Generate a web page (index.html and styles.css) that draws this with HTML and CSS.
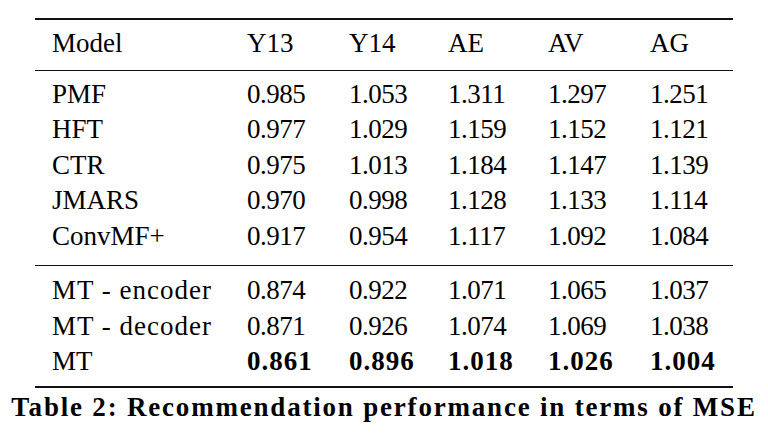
FILE: index.html
```html
<!DOCTYPE html>
<html>
<head>
<meta charset="utf-8">
<link rel="stylesheet" href="styles.css">
</head>
<body>
<figure class="figure">
  <table class="results">
    <colgroup>
      <col class="c-model"><col class="c-y13"><col class="c-y14"><col class="c-ae"><col class="c-av"><col class="c-ag">
    </colgroup>
    <thead>
      <tr><th>Model</th><th>Y13</th><th>Y14</th><th>AE</th><th>AV</th><th>AG</th></tr>
    </thead>
    <tbody class="baselines">
      <tr class="first"><td>PMF</td><td>0.985</td><td>1.053</td><td>1.311</td><td>1.297</td><td>1.251</td></tr>
      <tr><td>HFT</td><td>0.977</td><td>1.029</td><td>1.159</td><td>1.152</td><td>1.121</td></tr>
      <tr><td>CTR</td><td>0.975</td><td>1.013</td><td>1.184</td><td>1.147</td><td>1.139</td></tr>
      <tr><td>JMARS</td><td>0.970</td><td>0.998</td><td>1.128</td><td>1.133</td><td>1.114</td></tr>
      <tr class="last"><td>ConvMF+</td><td>0.917</td><td>0.954</td><td>1.117</td><td>1.092</td><td>1.084</td></tr>
    </tbody>
    <tbody class="ours">
      <tr class="first"><td class="lower">MT - encoder</td><td>0.874</td><td>0.922</td><td>1.071</td><td>1.065</td><td>1.037</td></tr>
      <tr><td class="lower">MT - decoder</td><td>0.871</td><td>0.926</td><td>1.074</td><td>1.069</td><td>1.038</td></tr>
      <tr class="last"><td>MT</td><td class="best">0.861</td><td class="best">0.896</td><td class="best">1.018</td><td class="best">1.026</td><td class="best">1.004</td></tr>
    </tbody>
  </table>
  <figcaption class="caption">Table 2: Recommendation performance in terms of MSE</figcaption>
</figure>
</body>
</html>
```
FILE: styles.css
```css
body {
  margin: 0;
  background: #fff;
  color: #000;
  font-family: "Liberation Serif", serif;
}

.figure {
  margin: 0;
  padding-top: 18px;
  display: flex;
  flex-direction: column;
  align-items: center;
}

.results {
  width: 698px;
  border-collapse: collapse;
  table-layout: fixed;
  font-family: "Liberation Serif", serif;
  font-size: 27px;
  line-height: 35.5px;
}

.c-model { width: 212px; }
.c-y13 { width: 102px; }
.c-y14 { width: 99px; }
.c-ae { width: 100px; }
.c-av { width: 102px; }
.c-ag { width: 83px; }

.results th,
.results td {
  padding: 0;
  text-align: left;
  font-weight: 400;
  white-space: nowrap;
  letter-spacing: -0.5px;
}

.results th:first-child,
.results td:first-child {
  padding-left: 17px;
  letter-spacing: 0;
}

.results thead tr {
  border-top: 2px solid #111;
  border-bottom: 1px solid #111;
}

.results thead th {
  padding-top: 6px;
  padding-bottom: 8px;
  letter-spacing: 0;
}

.baselines {
  border-bottom: 1px solid #111;
}

.baselines .first td { padding-top: 6px; }
.baselines .last td { padding-bottom: 10.5px; }

.ours {
  border-bottom: 2px solid #111;
}

.ours .first td { padding-top: 7.5px; }
.ours .last td { padding-bottom: 6.5px; }

.results td.lower {
  letter-spacing: 1px;
}

.results td.best {
  font-weight: 700;
  letter-spacing: 1px;
}

.caption {
  margin-top: 3px;
  font-family: "Liberation Serif", serif;
  font-size: 27px;
  line-height: 32px;
  font-weight: 700;
  letter-spacing: 1.8px;
  white-space: nowrap;
}
```
